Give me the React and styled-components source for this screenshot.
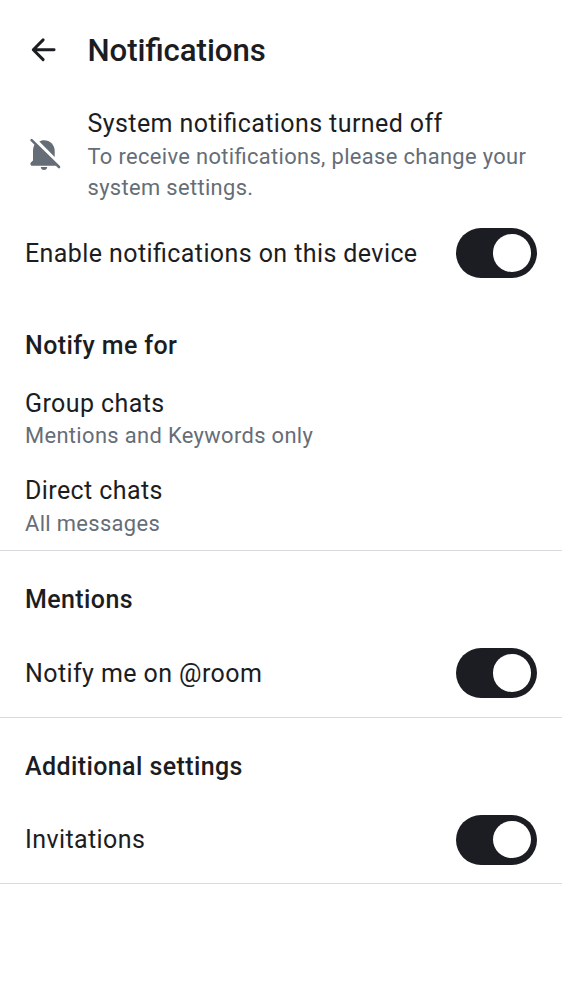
import React from "react";
import styled, { createGlobalStyle } from "styled-components";

const Global = createGlobalStyle`
  * { box-sizing: border-box; }
  body { margin: 0; background: #fff; }
`;
const Screen = styled.main`
  width: 562px; height: 1000px; overflow: hidden; background: #fff;
  color: #1b1d22; font-family: Roboto, sans-serif; font-feature-settings: "liga" 1;
`;
const Header = styled.header`
  display: flex; align-items: center; height: 100px; padding-left: 25px;
`;
const IconSlot = styled.div`
  width: 62.5px; flex: none; display: flex; align-items: center;
  svg { display: block; }
`;
const Title = styled.h1`
  margin: 0; padding-top: 1px; font-size: 31.2px; font-weight: 500; line-height: 38px; letter-spacing: -0.06px;
`;
const Banner = styled.section`
  display: flex; align-items: center; height: 103px; padding: 7px 25px 0;
`;
const Label = styled.div`
  font-size: 25px; line-height: 34px; letter-spacing: 0.41px; white-space: nowrap;
`;
const SwitchLabel = styled(Label)`
  padding-top: 1px;
`;
const Detail = styled.div`
  font-size: 21.9px; line-height: 31.25px; letter-spacing: 0.35px; color: #656d77; white-space: nowrap;
`;
const Group = styled.section`
  height: ${p => p.$height}px; border-bottom: 1px solid #d8dadd;
`;
const GroupTitle = styled.h2`
  margin: 0; padding: ${p => p.$top}px 25px 0; font-size: 25px; font-weight: 500; line-height: 34px;
  letter-spacing: 0.4px;
`;
const SwitchRow = styled.label`
  display: flex; align-items: center; justify-content: space-between; height: ${p => p.$height}px; padding: 0 25px;
`;
const Options = styled.div`
  padding-top: 24px;
`;
const Option = styled.div`
  padding: 0 25px; height: 87.3px;
  ${Label} { line-height: 33.3px; }
`;
const Track = styled.span`
  width: 81.25px; height: 50px; border-radius: 25px; background: #1b1d22; flex: none;
  display: flex; align-items: center; justify-content: flex-end; padding-right: 6.25px;
`;
const Thumb = styled.span`
  width: 37.5px; height: 37.5px; border-radius: 50%; background: #fff;
`;
const Switch = () => <Track role="switch" aria-checked="true"><Thumb /></Track>;

const BackIcon = () => (
  <svg width="37.5" height="37.5" viewBox="0 0 24 24" fill="none" stroke="#1b1d22" strokeWidth="1.9" strokeLinecap="round" strokeLinejoin="round">
    <path d="M18.6 12H5.4M11.6 5.7 5.3 12l6.3 6.3" />
  </svg>
);
const BellOffIcon = () => (
  <svg width="38" height="38" viewBox="0 0 38 38" fill="#656d77">
    <path d="M10.3 7.5C8.7 9.8 8 12.2 8 15v9.5l-1.9 1.8C4.7 27.7 5.5 29.8 7.4 29.8H32Z" />
    <path d="M14.3 5.6C16 4.7 17.5 4.3 19 4.3c6 0 10.7 4.7 10.7 10.7v5.9Z" />
    <path d="M15.8 31h6.4c0 1.7-1.4 3-3.2 3s-3.2-1.3-3.2-3Z" />
    <path d="M6.6 4.1 34 31" stroke="#656d77" strokeWidth="2.6" strokeLinecap="round" />
  </svg>
);

export default function App() {
  return (
    <>
      <Global />
      <Screen>
        <Header><IconSlot><BackIcon /></IconSlot><Title>Notifications</Title></Header>
        <Banner>
          <IconSlot><BellOffIcon /></IconSlot>
          <div>
            <Label>System notifications turned off</Label>
            <Detail>To receive notifications, please change your<br />system settings.</Detail>
          </div>
        </Banner>
        <SwitchRow $height={100}><SwitchLabel as="span">Enable notifications on this device</SwitchLabel><Switch /></SwitchRow>
        <Group $height={248}>
          <GroupTitle $top={26}>Notify me for</GroupTitle>
          <Options>
            <Option><Label>Group chats</Label><Detail>Mentions and Keywords only</Detail></Option>
            <Option><Label>Direct chats</Label><Detail>All messages</Detail></Option>
          </Options>
        </Group>
        <Group $height={166.5}>
          <GroupTitle $top={32}>Mentions</GroupTitle>
          <SwitchRow $height={112}><SwitchLabel as="span">Notify me on @room</SwitchLabel><Switch /></SwitchRow>
        </Group>
        <Group $height={166.5}>
          <GroupTitle $top={32}>Additional settings</GroupTitle>
          <SwitchRow $height={112}><SwitchLabel as="span">Invitations</SwitchLabel><Switch /></SwitchRow>
        </Group>
      </Screen>
    </>
  );
}
